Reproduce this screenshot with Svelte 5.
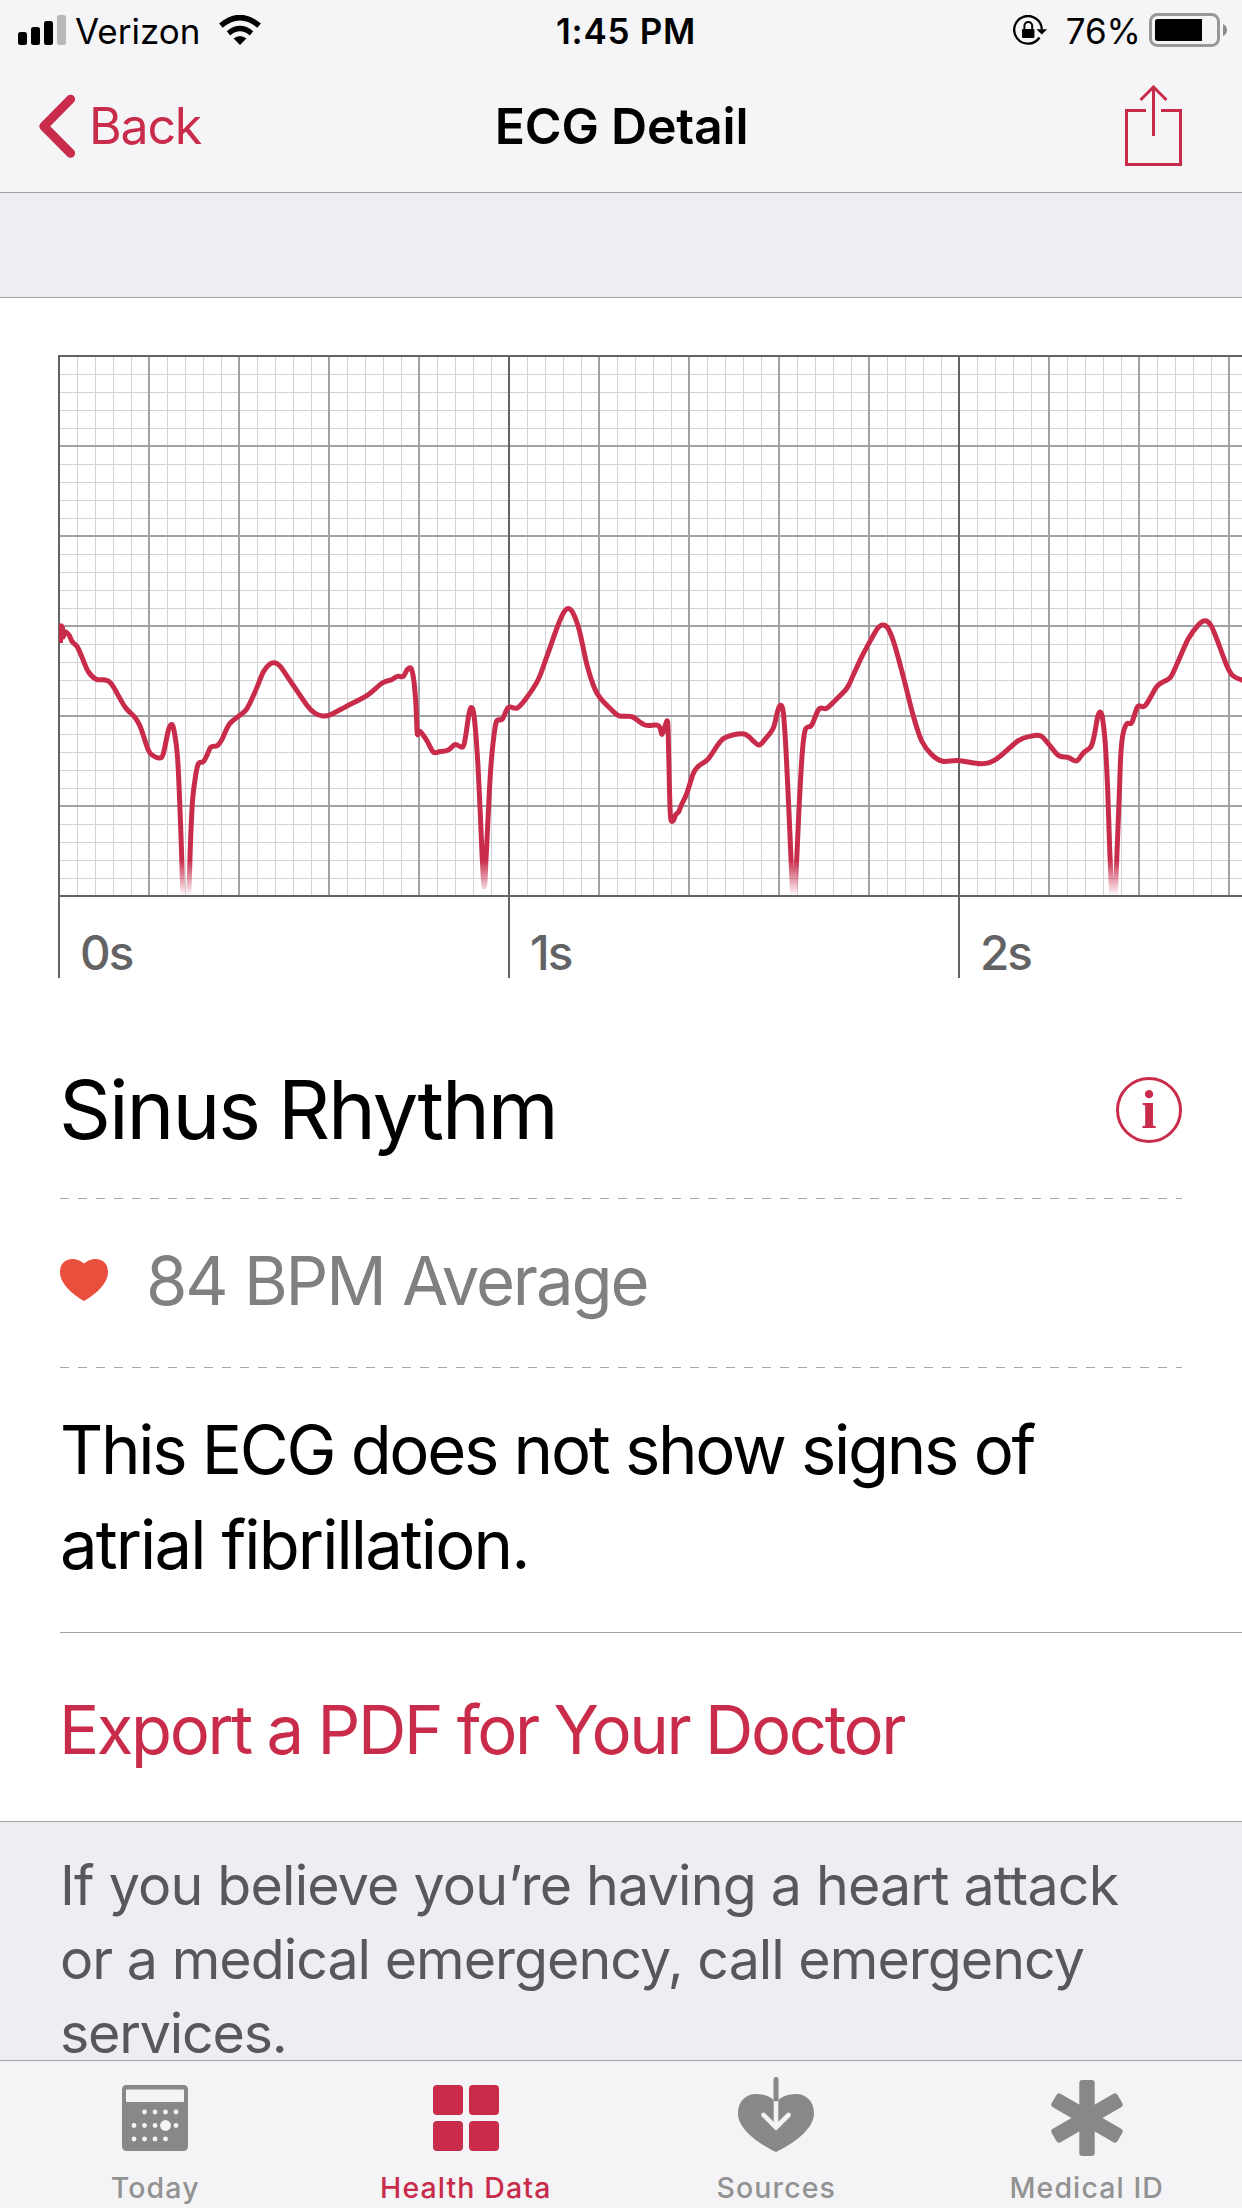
<script lang="ts">
  let activeTab = 'health';

  const tabs = [
    { id: 'today', label: 'Today' },
    { id: 'health', label: 'Health Data' },
    { id: 'sources', label: 'Sources' },
    { id: 'medical', label: 'Medical ID' }
  ];

  // chart frame, in px
  const left = 59;
  const top = 356;
  const right = 1242;
  const bottom = 896;
  const small = 18;
  const big = 90;

  const seconds = [0, 1, 2];

  const steps = (from: number, to: number, step: number) => {
    const out: number[] = [];
    for (let v = from; v <= to; v += step) out.push(v);
    return out;
  };

  const minorX = steps(left, right, small);
  const minorY = steps(top, bottom, small);
  const majorX = steps(left, right, big);
  const majorY = steps(top, bottom, big);

  // voltage samples as x,y pairs
  const samples = [
    [60.5, 643], [60.7, 627], [62.5, 628], [63, 637], [65, 631.7], [69.3, 635.5], [72.3, 641.8], [77.3, 646.8],
    [81.7, 656.5], [88.3, 671.7], [96, 679.2], [105, 680], [111.7, 684.3], [125, 707], [134, 716.3], [140, 726],
    [148.3, 750], [153.3, 755.8], [160, 758], [163.3, 753.7], [168.3, 730.6], [171, 724.7], [173.7, 729],
    [177.3, 754.6], [179.3, 792.5], [181.3, 845], [183, 896], [185.8, 940], [188.7, 896], [190.7, 836.7],
    [192.7, 798.8], [195.3, 777.7], [198.3, 763.8], [203.3, 761.7], [206.7, 755.8], [211, 747], [217.3, 745.7],
    [221.7, 739.9], [229.3, 724.3], [239, 715.9], [246.7, 709], [255, 691.9], [263.3, 672], [269.3, 664.5],
    [274.3, 662.8], [280, 666.2], [290, 680.5], [306.7, 704.9], [315, 713.3], [322.7, 715.9], [330.7, 714.6],
    [346.7, 706.2], [366.7, 695.7], [382.3, 683], [391.7, 679.7], [397.3, 676.3], [403.3, 676.3], [407.3, 669.6],
    [411.3, 668.7], [414, 681.8], [416, 706.2], [417.3, 733.5], [420, 731.4], [426.7, 740.3], [433.3, 752],
    [440, 751.6], [448.3, 750], [455.3, 744.5], [462.7, 747], [465.7, 735.6], [468.7, 715.4], [471.3, 707.4],
    [474, 715.4], [477.3, 754.6], [480, 807.2], [482, 853.5], [484.3, 887], [486.3, 853.5], [489, 798.8],
    [491, 765], [493.7, 737.7], [496.7, 720.9], [502.3, 719.2], [508.3, 707.4], [517.3, 707.9], [526, 698.6],
    [538, 680], [546.7, 656.9], [557.3, 627], [563.3, 613.2], [568.3, 608.5], [573.3, 613.6], [579.3, 630.4],
    [587.3, 666.2], [594.3, 687.7], [600, 697.8], [610, 708.3], [619.3, 715.9], [631.7, 716.7], [645, 725],
    [658.3, 725.6], [662, 734.4], [665, 726], [667.7, 722.6], [668.7, 754.6], [670.3, 813.5], [673, 821],
    [675.7, 814.8], [678.7, 811.8], [681.7, 804.3], [686.7, 793.7], [693.3, 773.5], [698.3, 766.4],
    [708.3, 758.8], [719.3, 742.8], [726.7, 736.9], [744, 734], [753.3, 741], [759, 745], [765, 739.4],
    [773.3, 728], [777.3, 712.5], [780.3, 705.3], [783.3, 712.5], [786, 750.4], [789.3, 819.8], [791.7, 874.5],
    [794, 910], [797, 853.5], [799.3, 803], [802.3, 752.5], [805.3, 729.7], [811.7, 725], [819, 709],
    [826.7, 708.3], [835.7, 699.9], [847, 688], [853.5, 674.5], [861.7, 656.9], [870, 641.4], [877.7, 628.3],
    [882.7, 625], [887.7, 627.9], [894, 643], [903.3, 676.7], [913.3, 715.9], [921.7, 741], [931.7, 754.6],
    [942.7, 761.3], [958.3, 760.5], [981.7, 763.8], [996.7, 758.8], [1018.3, 740.7], [1031.7, 736], [1041, 736],
    [1048.3, 743.6], [1058.3, 755.4], [1068.3, 757.5], [1076.7, 760.9], [1083.3, 752.9], [1091, 746.6],
    [1094.3, 735.2], [1097.7, 716.7], [1100, 712], [1102.3, 717], [1105.3, 744], [1107.7, 790.3],
    [1109.7, 849.3], [1111.7, 896], [1113.5, 925], [1115.3, 896], [1117.3, 845], [1119.3, 794.6],
    [1120.7, 756.7], [1122.7, 735.6], [1126.7, 723.9], [1131.7, 722.6], [1137.7, 706.6], [1145, 705.8],
    [1156.7, 686.8], [1163.3, 681.8], [1170.7, 677], [1178.3, 661], [1188.3, 638.8], [1198.3, 625],
    [1205, 620.7], [1210.7, 625], [1216.7, 638.8], [1226.7, 665.4], [1232.7, 675.5], [1243, 680.5]
  ];

  // Catmull-Rom through the samples
  function smooth(pts: number[][]) {
    let d = `M${pts[0][0]} ${pts[0][1]}`;
    for (let i = 0; i < pts.length - 1; i++) {
      const a = pts[Math.max(i - 1, 0)];
      const b = pts[i];
      const c = pts[i + 1];
      const e = pts[Math.min(i + 2, pts.length - 1)];
      d += `C${b[0] + (c[0] - a[0]) / 6} ${b[1] + (c[1] - a[1]) / 6} ${c[0] - (e[0] - b[0]) / 6} ${c[1] - (e[1] - b[1]) / 6} ${c[0]} ${c[1]}`;
    }
    return d;
  }

  const trace = smooth(samples);
</script>

<div class="screen">
  <header>
    <div class="status">
      <div class="status-left">
        <svg width="48" height="30" viewBox="0 0 48 30">
          <rect x="0" y="17" width="9" height="13" rx="2.5" />
          <rect x="13" y="12" width="9" height="18" rx="2.5" />
          <rect x="26" y="6" width="9" height="24" rx="2.5" />
          <rect x="39" y="0" width="9" height="30" rx="2.5" fill="#b8b8b9" />
        </svg>
        <span class="carrier">Verizon</span>
        <svg class="wifi" width="42" height="30" viewBox="0 0 42 30">
          <path d="M21 30L14.6 23.6Q21 18.2 27.4 23.6Z" />
          <path d="M9.5 18.3Q21 8.8 32.5 18.3" fill="none" stroke="#000" stroke-width="5.4" />
          <path d="M1.9 10.6Q21 -5.4 40.1 10.6" fill="none" stroke="#000" stroke-width="5.6" />
        </svg>
      </div>
      <div class="time">1:45 PM</div>
      <div class="status-right">
        <svg width="35" height="30" viewBox="0 0 35 30">
          <path d="M26.5 22.5A13.8 13.8 0 1 1 28.8 14.5" fill="none" stroke="#000" stroke-width="2.3" />
          <path d="M23.4 14.2H34.2L28.8 19.6Z" />
          <rect x="9" y="14" width="12.4" height="9" rx="1" />
          <path d="M11.4 14.5V11a3.9 3.9 0 0 1 7.8 0V14.5" fill="none" stroke="#000" stroke-width="2" />
        </svg>
        <span class="percent">76%</span>
        <svg width="78" height="34" viewBox="0 0 78 34">
          <rect x="1.5" y="1.5" width="68" height="31" rx="7" fill="none" stroke="#98989a" stroke-width="3" />
          <path d="M8.5 6H53V28H8.500Q6 28 6 25.500V8.500Q6 6 8.500 6Z" />
          <path d="M74 11Q78 13 78 17T74 23Z" fill="#8a8a8c" />
        </svg>
      </div>
    </div>
    <nav>
      <button class="back">
        <svg width="38" height="64" viewBox="0 0 38 64">
          <path d="M32.6 5.200L5.800 32.300L32.600 59.200" fill="none" stroke="#c92c4b" stroke-width="9" stroke-linecap="round" stroke-linejoin="round" />
        </svg>
        <span>Back</span>
      </button>
      <h1>ECG Detail</h1>
      <button class="share" aria-label="Share">
        <svg width="57" height="82" viewBox="0 0 57 82" fill="none" stroke="#c92c4b" stroke-width="3">
          <path d="M21 25.5H1.5V79.5H55.5V25.5H36" />
          <path d="M28.5 51V3M15.500 15L28.5 2L41.500 15" />
        </svg>
      </button>
    </nav>
  </header>

  <div class="spacer"></div>

  <main>
    <svg class="chart" width="1184" height="625" viewBox="58 355 1184 625">
      <defs>
        <linearGradient id="fade" gradientUnits="userSpaceOnUse" x1="0" y1="860" x2="0" y2="896">
          <stop offset="0" stop-color="#c92c4b" />
          <stop offset="1" stop-color="#c92c4b" stop-opacity="0" />
        </linearGradient>
        <clipPath id="plot">
          <rect x={left} y={top} width={right - left} height={bottom - top} />
        </clipPath>
      </defs>
      <g stroke="#d3d3d6" stroke-width="1">
        {#each minorX as x}
          <line x1={x + 0.5} x2={x + 0.5} y1={top} y2={bottom} />
        {/each}
        {#each minorY as y}
          <line x1={left} x2={right} y1={y + 0.5} y2={y + 0.5} />
        {/each}
      </g>
      <g stroke="#a1a1a6" stroke-width="2">
        {#each majorX as x}
          <line x1={x} x2={x} y1={top} y2={bottom} />
        {/each}
        {#each majorY as y}
          <line x1={left} x2={right} y1={y} y2={y} />
        {/each}
      </g>
      <g stroke="#636366" stroke-width="2">
        <line x1={left - 1} x2={right} y1={top} y2={top} />
        <line x1={left - 1} x2={right} y1={bottom} y2={bottom} />
        {#each seconds as s}
          <line x1={left + s * 450} x2={left + s * 450} y1={top} y2="978" />
        {/each}
      </g>
      {#each seconds as s}
        <text class="axis" x={left + 21 + s * 450} y="970">{s}s</text>
      {/each}
      <path d={trace} fill="none" stroke="url(#fade)" stroke-width="5" stroke-linejoin="round" clip-path="url(#plot)" />
    </svg>

    <section class="row result">
      <h2>Sinus Rhythm</h2>
      <svg width="66" height="66" viewBox="0 0 66 66">
        <circle cx="33" cy="33" r="31.5" fill="none" stroke="#c92c4b" stroke-width="3" />
        <text class="info" x="33" y="51" text-anchor="middle">i</text>
      </svg>
    </section>

    <svg class="dashes" width="1122" height="1" viewBox="0 0 1122 1">
      <line x1="0" x2="1122" y1="0.5" y2="0.5" stroke="#a8a8a8" stroke-dasharray="9 9" />
    </svg>

    <section class="row average">
      <svg width="48" height="42" viewBox="0 0 48 42">
        <path d="M24 42C13 35.5 0 25 0 13C0 5 5 0 12.5 0C17.5 0 21.5 2.5 24 4.6C26.5 2.5 30.5 0 35.5 0C43 0 48 5 48 13C48 25 35 35.5 24 42Z" fill="#ea4e3d" />
      </svg>
      <span class="bpm">84 BPM Average</span>
    </section>

    <svg class="dashes" width="1122" height="1" viewBox="0 0 1122 1">
      <line x1="0" x2="1122" y1="0.5" y2="0.5" stroke="#a8a8a8" stroke-dasharray="9 9" />
    </svg>

    <p class="message">
      <span>This ECG does not show signs of</span><br />
      <span class="second">atrial fibrillation.</span>
    </p>

    <div class="export"><a href="#pdf">Export a PDF for Your Doctor</a></div>
  </main>

  <p class="note">
    <span class="first">If you believe you’re having a heart attack</span><br />
    <span class="second">or a medical emergency, call emergency</span><br />
    <span>services.</span>
  </p>

  <footer>
    {#each tabs as tab}
      <button class="tab" class:active={activeTab === tab.id} on:click={() => (activeTab = tab.id)}>
        <svg width="80" height="84" viewBox="0 0 80 84" fill="currentColor">
          {#if tab.id === 'today'}
            <rect x="7" y="10" width="66" height="66" rx="4.5" />
            <rect x="11" y="14.5" width="58" height="12.5" rx="1" fill="#f4f4f5" />
            <g fill="#f4f4f5">
              {#each [0, 1, 2] as r}
                {#each [0, 1, 2, 3, 4] as c}
                  {#if !(r === 0 && c === 0) && !(r === 2 && c === 4)}
                    <circle cx={19 + c * 10.5} cy={37 + r * 13.5} r={r === 1 && c === 3 ? 5.4 : 2.4} />
                  {/if}
                {/each}
              {/each}
            </g>
          {:else if tab.id === 'health'}
            <rect x="7" y="10" width="30" height="30" rx="4" />
            <rect x="43" y="10" width="30" height="30" rx="4" />
            <rect x="7" y="46" width="30" height="30" rx="4" />
            <rect x="43" y="46" width="30" height="30" rx="4" />
          {:else if tab.id === 'sources'}
            <path d="M40 77C25 70 2 55 2 38.5C2 27 9 19 20 19C30 19 36 23 40 27C44 23 50 19 60 19C71 19 78 27 78 38.5C78 55 55 70 40 77Z" />
            <path d="M40 25V52M27.5 40L40 52.5L52.5 40" fill="none" stroke="#f4f4f6" stroke-width="4.6" stroke-linecap="round" />
            <path d="M40 4.5V24" stroke="currentColor" stroke-width="5" stroke-linecap="round" />
          {:else}
            {#each [0, 60, 120] as angle}
              <rect x="32.3" y="5" width="15.4" height="76" rx="3" transform="rotate({angle} 40 43)" />
            {/each}
          {/if}
        </svg>
        <span>{tab.label}</span>
      </button>
    {/each}
  </footer>
</div>

<style>
  :global(body) {
    background: #fff;
  }

  .screen {
    width: 1242px;
    height: 2208px;
    display: flex;
    flex-direction: column;
    overflow: hidden;
    background: #fff;
    color: #000;
    font-family: Inter, "Liberation Sans", sans-serif;
    white-space: nowrap;
  }

  svg {
    display: block;
    flex: none;
  }

  h1, h2, p {
    margin: 0;
    font-weight: 400;
  }

  button {
    border: 0;
    padding: 0;
    margin: 0;
    background: none;
    font: inherit;
    color: inherit;
  }

  header {
    background: #f5f5f7;
    border-bottom: 1px solid #a2a2a7;
  }

  .status {
    height: 62px;
    display: grid;
    grid-template-columns: 1fr auto 1fr;
    align-items: center;
    font-size: 35px;
    line-height: 44px;
  }
  .status-left {
    display: flex;
    align-items: center;
    padding: 0 0 2px 18px;
  }
  .carrier {
    width: 144px;
    padding: 2px 0 0 9px;
  }
  .time {
    padding-left: 10px;
    font-weight: 600;
    letter-spacing: 0.7px;
  }
  .status-right {
    display: flex;
    justify-content: flex-end;
    align-items: center;
    padding: 0 15px 2px 0;
  }
  .percent {
    padding: 2px 8px 0 18px;
  }

  nav {
    height: 130px;
    padding: 0 60px 2px 38px;
    box-sizing: border-box;
    display: grid;
    grid-template-columns: 1fr auto 1fr;
    align-items: center;
    font-size: 50px;
  }
  .back {
    display: flex;
    align-items: center;
    gap: 13px;
    color: #c92c4b;
    letter-spacing: -1.2px;
  }
  nav h1 {
    font-size: 50px;
    font-weight: 600;
    padding-left: 23px;
    letter-spacing: -0.2px;
  }
  .share {
    justify-self: end;
  }

  .spacer {
    height: 104px;
    background: #eeedf2;
    border-bottom: 1px solid #a2a2a7;
  }

  .chart {
    margin: 57px 0 41px 58px;
  }
  .axis {
    font-size: 47.5px;
    font-weight: 500;
    letter-spacing: -2px;
    fill: #636366;
  }

  .row {
    display: flex;
    align-items: center;
    margin: 0 60px;
  }
  .result {
    height: 177px;
    justify-content: space-between;
  }
  h2 {
    margin-left: -1px;
    font-size: 81px;
    letter-spacing: -2px;
    word-spacing: -2px;
  }
  .info {
    font: bold 55px "Liberation Serif", serif;
    fill: #c92c4b;
  }
  .dashes {
    margin-left: 60px;
  }
  .average {
    height: 168px;
    padding-bottom: 6px;
    box-sizing: border-box;
  }
  .bpm {
    padding-left: 38px;
    font-size: 67px;
    letter-spacing: -2.1px;
    word-spacing: 0.6px;
    color: #808080;
  }

  .message {
    height: 265px;
    margin-left: 60px;
    padding-top: 34px;
    box-sizing: border-box;
    border-bottom: 1px solid #a2a2a2;
    font-size: 67px;
    line-height: 95px;
    letter-spacing: -2.3px;
  }
  .message .second {
    letter-spacing: -1.9px;
  }

  .export {
    height: 188px;
    padding: 5px 0 0 59px;
    box-sizing: border-box;
    display: flex;
    align-items: center;
    font-size: 67px;
    letter-spacing: -2.4px;
    word-spacing: -0.7px;
  }
  .export a {
    color: #c92c4b;
    text-decoration: none;
  }

  .note {
    height: 239px;
    padding: 26px 60px 0;
    box-sizing: border-box;
    background: #eeedf2;
    border-top: 1px solid #a2a2a7;
    font-size: 55.5px;
    line-height: 74px;
    letter-spacing: -1.2px;
    color: #58585c;
  }
  .note .first {
    letter-spacing: -0.8px;
  }
  .note .second {
    letter-spacing: -0.98px;
  }

  footer {
    flex: 1;
    display: grid;
    grid-template-columns: repeat(4, 1fr);
    background: #f4f4f6;
    border-top: 1px solid #a2a2a7;
  }
  .tab {
    display: flex;
    flex-direction: column;
    align-items: center;
    padding-top: 14px;
    font-size: 28.5px;
    font-weight: 500;
    line-height: 34px;
    letter-spacing: 1.1px;
    color: #929292;
  }
  .tab svg {
    color: #888;
    margin-bottom: 12px;
  }
  .tab.active, .tab.active svg {
    color: #c92c4b;
  }
</style>
